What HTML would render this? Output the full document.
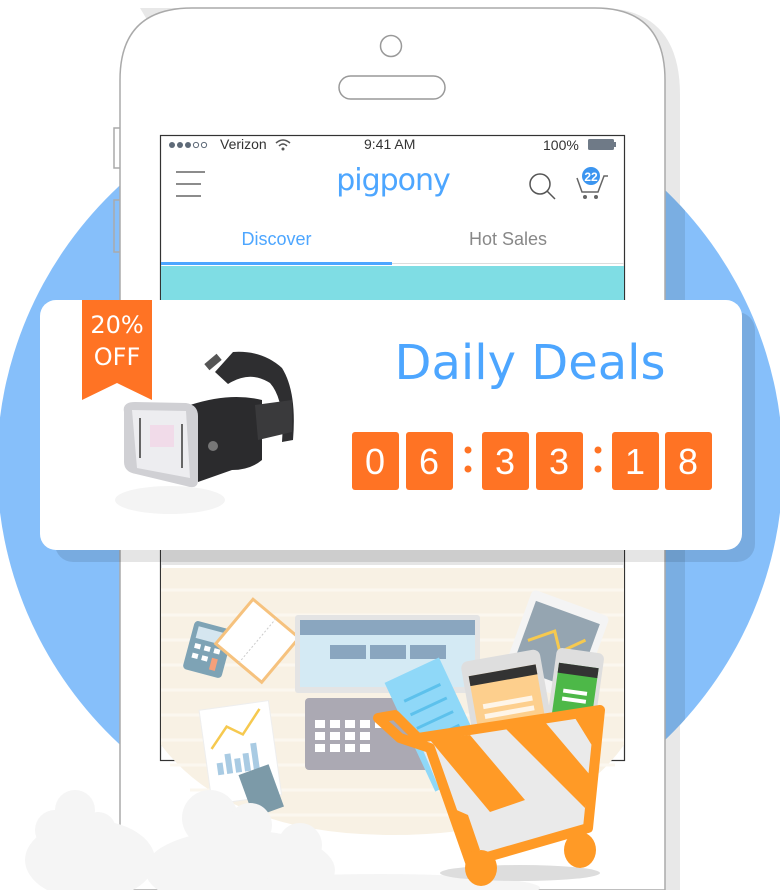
<!DOCTYPE html>
<html><head><meta charset="utf-8">
<style>
html,body{margin:0;padding:0;background:#fff;}
body{width:780px;height:890px;position:relative;overflow:hidden;font-family:"Liberation Sans",sans-serif;}
.abs{position:absolute;}
</style></head>
<body>
<svg class="abs" style="left:0;top:0" width="780" height="890" viewBox="0 0 780 890">
  <defs><clipPath id="cc"><ellipse cx="390" cy="465" rx="393" ry="385"/></clipPath></defs>
  <ellipse cx="390" cy="465" rx="393" ry="385" fill="#86bffa"/>
  <path d="M140 8 H600 Q680 8 680 95 V890 H665 Z" fill="#e8e8e8"/>
  <path d="M140 8 H600 Q685 8 685 95 V890 H665 Z" fill="#7aaee2" clip-path="url(#cc)"/>
  <path d="M120 890 V80 Q120 8 192 8 H595 Q665 8 665 80 V890 Z" fill="#fff" stroke="#aaa" stroke-width="1.5"/>
  <path d="M120 128 H114 V168 H120" fill="none" stroke="#aaa" stroke-width="1.5"/>
  <path d="M120 200 H114 V252 H120" fill="none" stroke="#aaa" stroke-width="1.5"/>
  <circle cx="391" cy="46" r="10.5" fill="#fff" stroke="#999" stroke-width="1.5"/>
  <rect x="339" y="76" width="106" height="23" rx="11.5" fill="#fff" stroke="#999" stroke-width="1.5"/>
  <rect x="160.5" y="135.5" width="464" height="625" fill="#fff" stroke="#333" stroke-width="1.2"/>
  <rect x="161" y="266" width="463" height="40" fill="#7fdde4"/>
  <rect x="161" y="262" width="231" height="3" fill="#4da6ff"/>
  <rect x="392" y="263" width="232" height="1" fill="#ddd"/>
  <path d="M161 568 H624 V745 Q560 835 392 835 Q230 835 161 745 Z" fill="#f8f1e4"/>
  <g stroke="#fbf7ef" stroke-width="3">
    <line x1="161" y1="590" x2="624" y2="590"/><line x1="161" y1="615" x2="624" y2="615"/>
    <line x1="161" y1="640" x2="624" y2="640"/><line x1="161" y1="665" x2="624" y2="665"/>
    <line x1="161" y1="690" x2="624" y2="690"/><line x1="161" y1="715" x2="624" y2="715"/>
    <line x1="161" y1="740" x2="624" y2="740"/><line x1="170" y1="765" x2="615" y2="765"/>
    <line x1="190" y1="790" x2="595" y2="790"/><line x1="230" y1="815" x2="555" y2="815"/>
  </g>
  <rect x="161" y="550" width="463" height="15" fill="#e5e5e5"/>
  <g stroke="#666" stroke-width="1.5"><line x1="176" y1="172" x2="205" y2="172"/><line x1="176" y1="184" x2="201" y2="184"/><line x1="176" y1="196" x2="201" y2="196"/></g>
  <circle cx="540" cy="184" r="10" fill="none" stroke="#555" stroke-width="1.5"/>
  <line x1="547" y1="191" x2="555" y2="199" stroke="#555" stroke-width="1.5"/>
  <path d="M577 178 L582 192 H598 L604 176 H608" fill="none" stroke="#666" stroke-width="1.5"/>
  <circle cx="585" cy="197" r="2" fill="#666"/><circle cx="596" cy="197" r="2" fill="#666"/>
  <circle cx="591" cy="176" r="9" fill="#3b95f0"/>
  <text x="591" y="181" font-size="12" font-family="Liberation Sans" fill="#fff" text-anchor="middle" font-weight="bold">22</text>
  <rect x="588" y="139" width="26" height="11" rx="1.5" fill="#6f7a87"/><rect x="614" y="142" width="2" height="5" fill="#6f7a87"/>
  <g fill="#5e6a78"><circle cx="172" cy="145" r="3"/><circle cx="180" cy="145" r="3"/><circle cx="188" cy="145" r="3"/></g>
  <g fill="none" stroke="#5e6a78"><circle cx="196" cy="145" r="2.6"/><circle cx="204" cy="145" r="2.6"/></g>
  <path d="M276 143 Q283 137 290 143 M279 146 Q283 142 287 146" fill="none" stroke="#555" stroke-width="1.5"/><circle cx="283" cy="149" r="1.5" fill="#555"/>

  <rect x="55" y="312" width="700" height="250" rx="18" fill="#000" opacity="0.1"/>
  <rect x="40" y="300" width="702" height="250" rx="16" fill="#fff"/>
  <path d="M82 300 H152 V400 L117 383 L82 400 Z" fill="#ff7324"/>

  <g>
    <ellipse cx="170" cy="500" rx="55" ry="14" fill="#f4f4f4"/>
    <path d="M215 372 L233 352 Q262 350 282 368 Q297 392 293 440 L282 442 Q285 400 270 383 Q250 370 228 384 Z" fill="#2e2e30"/>
    <rect x="205" y="358" width="16" height="8" transform="rotate(-40 213 362)" fill="#555"/>
    <path d="M190 405 Q230 392 262 400 L262 460 Q250 470 232 470 L198 482 Z" fill="#2b2b2d"/>
    <path d="M255 405 L292 400 L292 432 L258 440 Z" fill="#3a3a3c"/>
    <path d="M124 412 Q122 402 135 402 L186 403 Q198 405 198 416 L198 480 Q198 490 186 486 L136 474 Q124 472 124 462 Z" fill="#d0d0d4"/>
    <path d="M132 410 L186 411 L190 478 L137 468 Z" fill="#ededf0"/>
    <rect x="150" y="425" width="24" height="22" fill="#f1dbe9"/>
    <g fill="#666"><rect x="139" y="418" width="2" height="40"/><rect x="181" y="424" width="2" height="44"/></g>
    <circle cx="213" cy="446" r="5" fill="#777"/>
  </g>
  <g fill="#ff7324">
    <rect x="352" y="432" width="47" height="58" rx="3"/><rect x="406" y="432" width="47" height="58" rx="3"/>
    <rect x="482" y="432" width="47" height="58" rx="3"/><rect x="536" y="432" width="47" height="58" rx="3"/>
    <rect x="612" y="432" width="47" height="58" rx="3"/><rect x="665" y="432" width="47" height="58" rx="3"/>
    <circle cx="468" cy="450" r="3.5"/><circle cx="468" cy="469" r="3.5"/>
    <circle cx="598" cy="450" r="3.5"/><circle cx="598" cy="469" r="3.5"/>
  </g>
  <g fill="#fff" font-family="Liberation Sans" font-size="36" text-anchor="middle">
    <text x="375" y="474">0</text><text x="429" y="474">6</text><text x="505" y="474">3</text>
    <text x="559" y="474">3</text><text x="635" y="474">1</text><text x="688" y="474">8</text>
  </g>

  <g transform="rotate(15 210 650)"><rect x="188" y="625" width="40" height="50" rx="4" fill="#7ea3b5"/><rect x="193" y="630" width="30" height="12" fill="#d5e6f0"/>
    <g fill="#fff"><rect x="194" y="647" width="6" height="5"/><rect x="204" y="647" width="6" height="5"/><rect x="214" y="647" width="6" height="5"/><rect x="194" y="657" width="6" height="5"/><rect x="204" y="657" width="6" height="5"/><rect x="214" y="657" width="6" height="12" fill="#f6a07a"/></g></g>
  <g transform="rotate(40 258 640)"><rect x="228" y="612" width="60" height="58" fill="#fff" stroke="#f6c27e" stroke-width="3"/><line x1="258" y1="612" x2="258" y2="670" stroke="#ccc" stroke-dasharray="2 2"/></g>
  <rect x="295" y="615" width="185" height="78" rx="3" fill="#e4e4e4"/>
  <rect x="300" y="620" width="175" height="15" fill="#8aa6bf"/>
  <rect x="300" y="635" width="175" height="52" fill="#d4eaf4"/>
  <g fill="#8aa6bf"><rect x="330" y="645" width="36" height="14"/><rect x="370" y="645" width="36" height="14"/><rect x="410" y="645" width="36" height="14"/></g>
  <rect x="305" y="698" width="140" height="72" rx="4" fill="#aba9b3"/>
  <g fill="#fff"><rect x="315" y="720" width="10" height="8"/><rect x="330" y="720" width="10" height="8"/><rect x="345" y="720" width="10" height="8"/><rect x="360" y="720" width="10" height="8"/><rect x="375" y="720" width="10" height="8"/><rect x="315" y="732" width="10" height="8"/><rect x="330" y="732" width="10" height="8"/><rect x="345" y="732" width="10" height="8"/><rect x="360" y="732" width="10" height="8"/><rect x="315" y="744" width="10" height="8"/><rect x="330" y="744" width="10" height="8"/><rect x="345" y="744" width="10" height="8"/><rect x="360" y="744" width="10" height="8"/></g>
  <g transform="rotate(20 555 645)"><rect x="515" y="600" width="82" height="92" rx="5" fill="#f4f4f4"/><rect x="522" y="610" width="68" height="70" fill="#95a5b1"/><path d="M528 650 L550 632 L562 650 L582 630" stroke="#f6c94f" stroke-width="3" fill="none"/></g>
  <g transform="rotate(-25 435 720)"><rect x="405" y="665" width="60" height="120" fill="#8fd8f8"/><g stroke="#5dc1ec" stroke-width="3"><line x1="415" y1="690" x2="455" y2="690"/><line x1="415" y1="705" x2="455" y2="705"/><line x1="415" y1="720" x2="455" y2="720"/><line x1="415" y1="735" x2="455" y2="735"/></g></g>
  <g transform="rotate(-10 508 715)"><rect x="470" y="655" width="80" height="120" rx="7" fill="#dedede"/><rect x="476" y="670" width="68" height="88" fill="#fdcf8d"/><rect x="476" y="670" width="68" height="10" fill="#333"/><g fill="#fff" opacity="0.8"><rect x="485" y="700" width="50" height="5"/><rect x="485" y="710" width="50" height="5"/></g></g>
  <g transform="rotate(8 573 700)"><rect x="550" y="650" width="48" height="105" rx="6" fill="#dedede"/><rect x="554" y="665" width="40" height="75" fill="#4db848"/><rect x="554" y="665" width="40" height="10" fill="#333"/><g fill="#fff"><rect x="562" y="690" width="24" height="4"/><rect x="562" y="698" width="24" height="4"/></g></g>
  <g transform="rotate(-8 240 750)"><rect x="205" y="705" width="70" height="95" fill="#fff" stroke="#eee"/><path d="M212 745 L230 725 L245 735 L265 712" stroke="#f6c94f" stroke-width="2.5" fill="none"/><g fill="#a9cbe3"><rect x="215" y="760" width="6" height="12"/><rect x="224" y="752" width="6" height="20"/><rect x="233" y="758" width="6" height="14"/><rect x="242" y="754" width="6" height="18"/><rect x="251" y="745" width="6" height="27"/></g></g>
  <g transform="rotate(-20 262 790)"><rect x="245" y="768" width="32" height="45" fill="#7c9aa8"/></g>

  <g fill="#f5f5f5">
    <ellipse cx="90" cy="860" rx="65" ry="40"/>
    <circle cx="55" cy="830" r="20"/><circle cx="75" cy="810" r="20"/><circle cx="98" cy="830" r="18"/>
    <ellipse cx="240" cy="870" rx="95" ry="40"/>
    <circle cx="210" cy="818" r="28"/><circle cx="250" cy="825" r="22"/><circle cx="300" cy="845" r="22"/>
    <ellipse cx="380" cy="888" rx="160" ry="14"/>
  </g>
  <ellipse cx="520" cy="873" rx="80" ry="8" fill="#ddd"/>
  <path d="M418 738 L600 710 L588 828 L470 862 Z" fill="#eaeaea"/>
  <g fill="#ff9a26">
    <path d="M430 740 L470 735 L525 800 L490 812 Z"/>
    <path d="M505 728 L545 722 L590 775 L585 808 Z"/>
    <path d="M452 808 L468 815 L480 850 L468 855 Z"/>
    <path d="M575 718 L600 712 L596 752 Z"/>
  </g>
  <path d="M378 718 L395 715 L418 738 L600 710 L588 828 L470 862 L430 748 L400 738 Z" fill="none" stroke="#ff9a26" stroke-width="10" stroke-linejoin="round"/>
  <ellipse cx="481" cy="868" rx="16" ry="18" fill="#ff9a26"/>
  <ellipse cx="580" cy="850" rx="16" ry="18" fill="#ff9a26"/>
</svg>

<div class="abs" style="left:220px;top:136px;font-size:14px;color:#333;">Verizon</div>
<div class="abs" style="left:364px;top:136px;font-size:14px;color:#333;">9:41 AM</div>
<div class="abs" style="left:543px;top:137px;font-size:14px;color:#333;">100%</div>
<div class="abs" style="left:320px;top:163px;width:146px;text-align:center;font-size:30px;color:#4da6ff;font-family:'DejaVu Sans',sans-serif;letter-spacing:-1px;">pigpony</div>
<div class="abs" style="left:161px;top:229px;width:231px;text-align:center;font-size:18px;color:#4da6ff;">Discover</div>
<div class="abs" style="left:392px;top:229px;width:232px;text-align:center;font-size:18px;color:#888;">Hot Sales</div>
<div class="abs" style="left:82px;top:309px;width:70px;text-align:center;font-size:24px;line-height:32px;color:#fff;font-family:'DejaVu Sans',sans-serif;">20%<br>OFF</div>
<div class="abs" style="left:360px;top:335px;width:340px;text-align:center;font-size:48px;color:#4da6ff;font-family:'DejaVu Sans',sans-serif;">Daily Deals</div>
</body></html>
